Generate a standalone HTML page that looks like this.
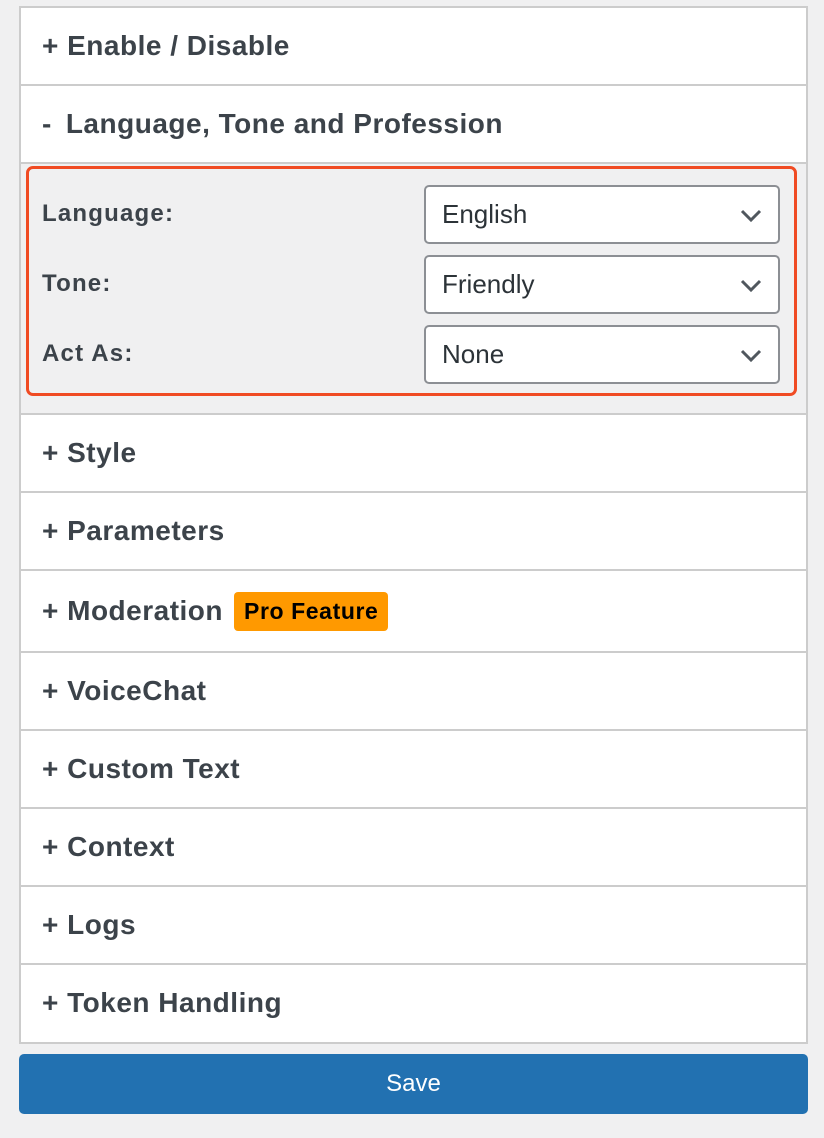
<!DOCTYPE html>
<html><head><meta charset="utf-8"><style>
*{box-sizing:border-box;margin:0;padding:0}
body{width:824px;height:1138px;background:#f0f0f1;font-family:"Liberation Sans",Arial,sans-serif;position:relative;overflow:hidden}
.box{position:absolute;left:19px;top:6px;width:789px;height:1038px;border:2px solid #ccc;background:#fff}
.sec{position:absolute;left:21px;width:785px;display:flex;align-items:center;padding-left:21px;font-weight:bold;font-size:28px;color:#3c434a;letter-spacing:0.5px}
.line{position:absolute;left:21px;width:785px;height:2px;background:#ccc}
.panel{position:absolute;left:21px;top:164px;width:785px;height:249px;background:#f0f0f1}
.red{position:absolute;left:26px;top:166px;width:771px;height:230px;border:3px solid #f04b23;border-radius:7px}
.lbl{position:absolute;left:42px;font-weight:bold;font-size:24px;color:#3c434a;letter-spacing:1.2px}
.sel{position:absolute;left:424px;width:356px;height:59px;border:2px solid #8c8f94;border-radius:5px;background:#fff;font-size:26px;color:#2c3338;padding-left:16px;display:flex;align-items:center}
.sel svg{position:absolute;right:16px;top:22px}
.badge{display:inline-block;background:#ff9900;color:#000;font-size:23px;border-radius:4px;padding:6px 10px;margin-left:11px;letter-spacing:0.6px}
.save{position:absolute;left:19px;top:1054px;width:789px;height:60px;background:#2271b1;border-radius:5px;color:#fff;font-size:24px;display:flex;align-items:center;justify-content:center}
</style></head><body>
<div class="box"></div>
<div class="sec" style="top:8px;height:76px">+&nbsp;Enable / Disable</div>
<div class="line" style="top:84px"></div>
<div class="sec" style="top:86px;height:76px"><span style="margin-right:14px">-</span>Language, Tone and Profession</div>
<div class="line" style="top:162px"></div>
<div class="panel"></div>
<div class="red"></div>
<div class="lbl" style="top:200px">Language:</div>
<div class="lbl" style="top:270px">Tone:</div>
<div class="lbl" style="top:340px">Act As:</div>
<div class="sel" style="top:185px">English<svg width="22" height="14" viewBox="0 0 22 14"><path d="M2 2l9 9 9-9" stroke="#50575e" stroke-width="3" fill="none"/></svg></div>
<div class="sel" style="top:255px">Friendly<svg width="22" height="14" viewBox="0 0 22 14"><path d="M2 2l9 9 9-9" stroke="#50575e" stroke-width="3" fill="none"/></svg></div>
<div class="sel" style="top:325px">None<svg width="22" height="14" viewBox="0 0 22 14"><path d="M2 2l9 9 9-9" stroke="#50575e" stroke-width="3" fill="none"/></svg></div>
<div class="line" style="top:413px"></div>
<div class="sec" style="top:415px;height:76px">+&nbsp;Style</div>
<div class="line" style="top:491px"></div>
<div class="sec" style="top:493px;height:76px">+&nbsp;Parameters</div>
<div class="line" style="top:569px"></div>
<div class="sec" style="top:571px;height:80px">+&nbsp;Moderation<span class="badge">Pro Feature</span></div>
<div class="line" style="top:651px"></div>
<div class="sec" style="top:653px;height:76px">+&nbsp;VoiceChat</div>
<div class="line" style="top:729px"></div>
<div class="sec" style="top:731px;height:76px">+&nbsp;Custom Text</div>
<div class="line" style="top:807px"></div>
<div class="sec" style="top:809px;height:76px">+&nbsp;Context</div>
<div class="line" style="top:885px"></div>
<div class="sec" style="top:887px;height:76px">+&nbsp;Logs</div>
<div class="line" style="top:963px"></div>
<div class="sec" style="top:965px;height:76px">+&nbsp;Token Handling</div>
<div class="save">Save</div>
</body></html>
